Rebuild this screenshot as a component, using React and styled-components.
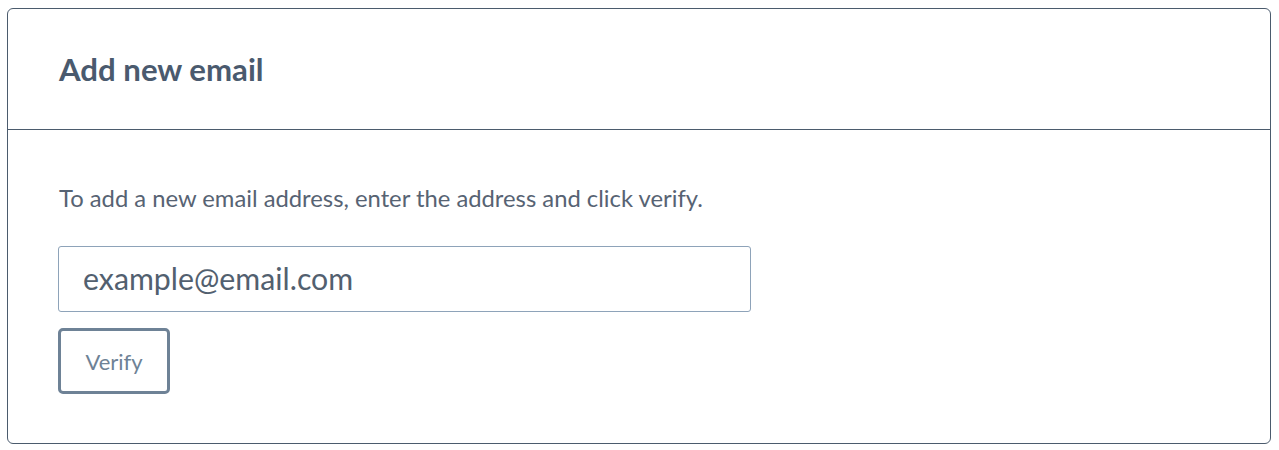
import React from "react";
import styled, { createGlobalStyle } from "styled-components";

const Global = createGlobalStyle`
  body {
    margin: 8px 8px 8px 7px;
    background: #ffffff;
    font-family: Lato, "Noto Sans", sans-serif;
  }
  * { box-sizing: border-box; }
`;

const Card = styled.section`
  border: 1px solid #4b5b6d;
  border-radius: 6px;
  background: #fff;
`;

const Header = styled.header`
  height: 121px;
  display: flex;
  align-items: center;
  padding: 0 51px;
  border-bottom: 1px solid #4b5b6d;
`;

const Title = styled.h2`
  margin: 0;
  font-size: 31.2px;
  font-weight: 700;
  color: #4a5a6e;
`;

const Body = styled.div`
  padding: 50px 50px 49px;
  display: flex;
  flex-direction: column;
  align-items: flex-start;
`;

const Text = styled.p`
  margin: 0 0 30px 1px;
  font-size: 23.8px;
  line-height: 36px;
  color: #576373;
`;

const Input = styled.input`
  width: 693px;
  height: 66px;
  padding: 0 24px 3px;
  border: 1px solid #8ea3b9;
  border-radius: 3px;
  font-family: inherit;
  font-size: 30.3px;
  color: #52606f;
  outline: none;
  &::placeholder { color: #52606f; }
`;

const Button = styled.button`
  margin-top: 16px;
  width: 112px;
  height: 66px;
  border: 3px solid #6e8296;
  border-radius: 5px;
  background: #fff;
  font-family: inherit;
  font-size: 22px;
  color: #6e8296;
  cursor: pointer;
`;

export default function App() {
  return (
    <>
      <Global />
      <Card>
        <Header>
          <Title>Add new email</Title>
        </Header>
        <Body>
          <Text>To add a new email address, enter the address and click verify.</Text>
          <Input type="email" placeholder="example@email.com" />
          <Button>Verify</Button>
        </Body>
      </Card>
    </>
  );
}
